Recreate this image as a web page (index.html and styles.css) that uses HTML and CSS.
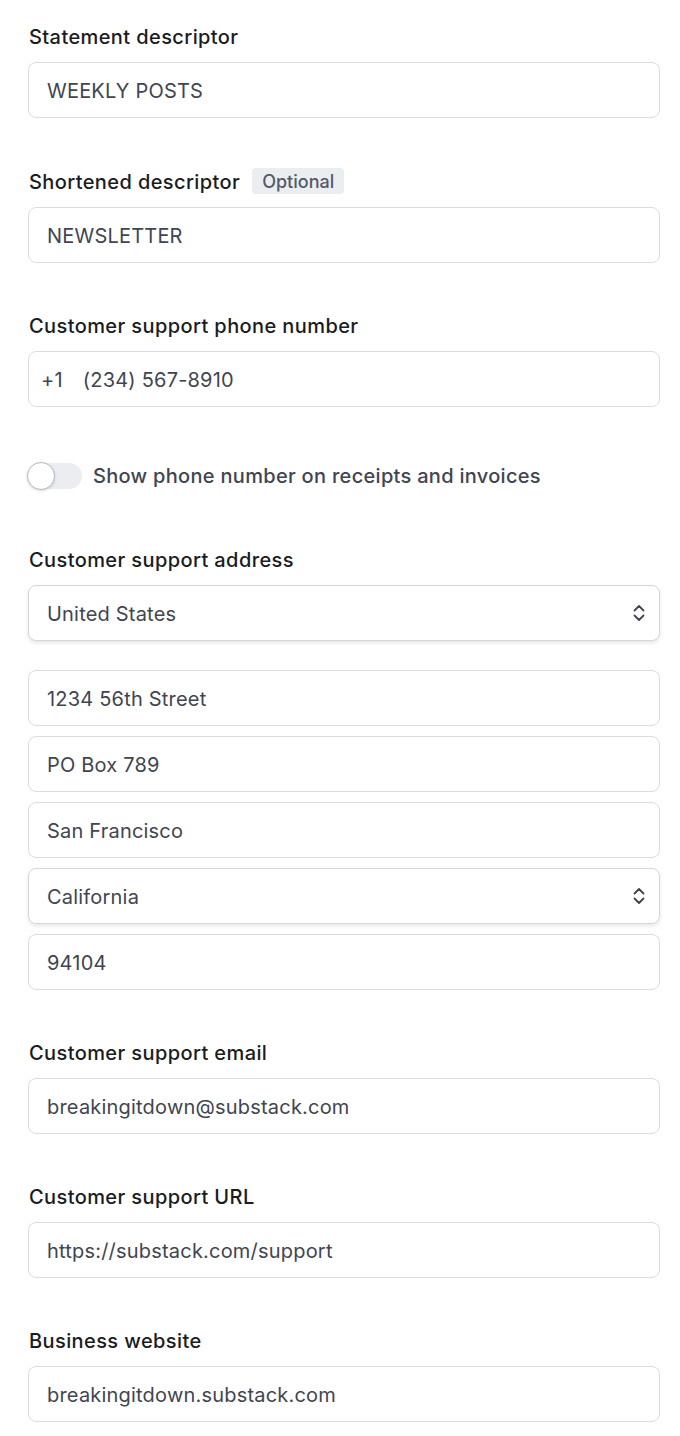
FILE: index.html
```html
<!DOCTYPE html>
<html lang="en">
<head>
<meta charset="utf-8">
<title>Public details</title>
<link rel="stylesheet" href="styles.css">
</head>
<body>
<form class="form">
  <div class="field">
    <div class="label-row"><label class="label">Statement descriptor</label></div>
    <div class="input"><span>WEEKLY POSTS</span></div>
  </div>

  <div class="field">
    <div class="label-row"><label class="label">Shortened descriptor</label><span class="badge">Optional</span></div>
    <div class="input"><span>NEWSLETTER</span></div>
  </div>

  <div class="field">
    <div class="label-row"><label class="label">Customer support phone number</label></div>
    <div class="input input-phone"><span class="prefix">+1</span><span>(234) 567-8910</span></div>
  </div>

  <div class="toggle-row">
    <span class="toggle"><span class="knob"></span></span>
    <span class="toggle-text">Show phone number on receipts and invoices</span>
  </div>

  <div class="field">
    <div class="label-row"><label class="label">Customer support address</label></div>
    <div class="input select"><span>United States</span>
      <svg class="chev" width="14" height="18" viewBox="0 0 14 18" fill="none" stroke="#414552" stroke-width="1.8" stroke-linecap="round" stroke-linejoin="round"><path d="M2.5 6.5 7 2l4.5 4.5"/><path d="M2.5 11.5 7 16l4.5-4.5"/></svg>
    </div>
    <div class="stack">
      <div class="input"><span>1234 56th Street</span></div>
      <div class="input"><span>PO Box 789</span></div>
      <div class="input"><span>San Francisco</span></div>
      <div class="input select"><span>California</span>
        <svg class="chev" width="14" height="18" viewBox="0 0 14 18" fill="none" stroke="#414552" stroke-width="1.8" stroke-linecap="round" stroke-linejoin="round"><path d="M2.5 6.5 7 2l4.5 4.5"/><path d="M2.5 11.5 7 16l4.5-4.5"/></svg>
      </div>
      <div class="input"><span>94104</span></div>
    </div>
  </div>

  <div class="field">
    <div class="label-row"><label class="label">Customer support email</label></div>
    <div class="input"><span>breakingitdown@substack.com</span></div>
  </div>

  <div class="field">
    <div class="label-row"><label class="label">Customer support URL</label></div>
    <div class="input"><span>https://substack.com/support</span></div>
  </div>

  <div class="field">
    <div class="label-row"><label class="label">Business website</label></div>
    <div class="input"><span>breakingitdown.substack.com</span></div>
  </div>
</form>
</body>
</html>
```

FILE: styles.css
```css
* { box-sizing: border-box; }
html, body { margin: 0; padding: 0; background: #ffffff; }
body {
  font-family: Inter, "Noto Sans", "Liberation Sans", sans-serif;
  color: #1f2328;
}
.form {
  display: flex;
  flex-direction: column;
  gap: 51px;
  padding: 25px 20px 14px 28px;
}
.field {
  display: flex;
  flex-direction: column;
  gap: 13px;
}
.label-row {
  display: flex;
  align-items: center;
  gap: 12px;
  min-height: 24px;
  padding-left: 1px;
}
.label {
  font-size: 20px;
  line-height: 24px;
  font-weight: 500;
  letter-spacing: 0.4px;
  color: #1a1c22;
}
.badge {
  display: inline-flex;
  align-items: center;
  height: 26px;
  margin-top: -1px;
  padding: 0 10px;
  border-radius: 4px;
  background: #ebeef1;
  color: #545969;
  font-size: 18px;
  font-weight: 500;
}
.input {
  display: flex;
  align-items: center;
  height: 56px;
  padding: 2px 18px 0;
  border: 1px solid #dcdde1;
  border-radius: 8px;
  background: #fff;
  font-size: 20px;
  letter-spacing: 0.2px;
  color: #414552;
}
.input-phone { padding-left: 12px; gap: 20px; }
.select {
  justify-content: space-between;
  padding-right: 13px;
  border-color: #d5d7dc;
  box-shadow: 0 2px 4px rgba(0, 0, 0, 0.1);
}
.select .chev { margin-top: -2px; }
.stack {
  display: flex;
  flex-direction: column;
  gap: 10px;
  margin-top: 16px;
}
.toggle-row {
  display: flex;
  align-items: center;
  gap: 11px;
  margin: 4px 0 7px;
  height: 28px;
}
.toggle {
  position: relative;
  width: 54px;
  height: 26px;
  border-radius: 13px;
  background: #ebedf1;
  flex: none;
}
.knob {
  position: absolute;
  left: -1px;
  top: -1px;
  width: 28px;
  height: 28px;
  border-radius: 50%;
  background: #fff;
  border: 1px solid #b6bac3;
  box-shadow: 0 1px 3px rgba(0, 0, 0, 0.15);
}
.toggle-text {
  font-size: 20px;
  letter-spacing: 0.3px;
  color: #414552;
  font-weight: 500;
}
```
